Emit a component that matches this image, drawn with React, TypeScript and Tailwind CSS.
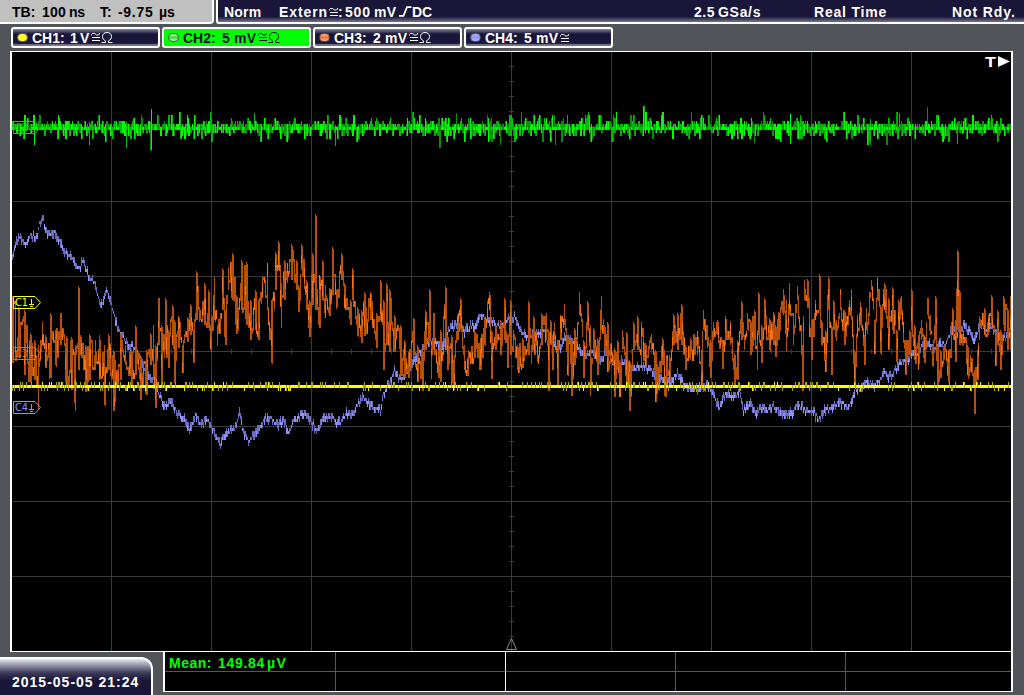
import React from 'react';
import clsx from 'clsx';

// ── Geometry ──────────────────────────────────────────────────────────────────
// The graticule keeps screen coordinates so traces and markers share one space.
const LEFT = 12;
const RIGHT = 1010;
const STEP = 3; // ADC quantisation, in pixels

const makeRandom = (seed: number) => {
  let s = seed;
  return () => {
    s = (s * 1664525 + 1013904223) >>> 0;
    return s / 4294967296;
  };
};

const quantise = (v: number, base: number) => base + Math.round((v - base) / STEP) * STEP;

interface Trace {
  dim: string;
  bright: string;
}

const bar = (x: number, y1: number, y2: number) => `M${x + 0.5} ${y1}V${y2}`;

// ── Channel data ──────────────────────────────────────────────────────────────
// x, highest point, lowest point
const CH3_ENVELOPE = `12 296 363,18 307 355,24 310 375,30 333 383,34 340 380,38 345 409,42 322 345,45 335 368,50 313 378,55 330 365,
60 313 345,66 336 385,71 337 390,75 345 411,78 286 370,80 335 355,85 345 392,89 334 380,95 340 370,99 335 380,104 345 405,108 334 370,
113 350 411,115 360 402,120 333 380,125 345 365,131 350 387,135 325 375,140 355 400,146 350 395,150 333 365,153 325 380,155 345 408,158 298 345,
161 325 385,165 298 350,168 330 368,172 305 345,174 320 383,178 316 348,182 345 373,187 317 342,190 304 335,193 330 363,196 271 320,
200 310 320,204 283 325,208 290 328,210 325 350,214 277 320,217 325 346,222 268 310,225 310 345,228 267 290,232 253 300,236 295 334,
241 260 310,246 262 325,250 300 340,255 290 330,258 300 340,262 277 298,267 263 310,271 300 363,275 252 290,278 241 270,281 283 328,
284 260 300,287 263 283,291 244 280,296 260 290,298 285 312,301 244 270,306 280 310,309 300 337,312 253 305,315 214 310,319 275 328,
322 260 300,325 285 318,329 288 316,332 247 295,336 290 309,341 253 280,344 283 308,350 300 325,352 268 300,357 307 336,361 310 343,
364 292 336,370 292 320,376 313 348,380 280 320,383 300 370,386 283 345,389 289 352,394 315 352,400 325 375,404 340 378,408 352 378,
413 318 360,417 345 382,422 350 391,425 310 350,429 289 340,431 345 379,433 313 350,438 350 378,440 330 382,445 286 350,447 335 370,
451 335 383,453 360 390,457 315 340,460 298 330,464 345 370,468 350 376,474 330 358,480 338 370,484 317 345,489 292 310,491 330 379,
495 325 350,500 320 355,504 298 340,507 335 368,510 300 355,513 330 352,517 345 370,522 338 368,528 301 355,531 345 364,533 316 350,
537 340 362,541 313 345,546 313 340,548 330 391,550 320 345,552 335 370,554 322 340,557 340 388,560 315 340,564 304 325,567 335 375,
571 340 396,574 328 365,579 292 315,583 340 378,587 301 330,590 325 396,593 328 355,597 338 375,601 296 330,604 325 350,607 322 372,
611 343 355,614 348 397,617 340 370,619 360 397,622 330 350,626 332 388,629 360 411,633 322 350,637 316 350,641 322 365,646 345 368,
651 334 350,655 350 402,658 367 390,662 338 365,664 350 396,669 355 385,673 314 345,677 313 350,681 304 345,685 345 370,690 338 360,
697 331 355,701 350 390,703 310 330,707 325 348,710 340 378,713 322 340,717 320 335,722 340 369,725 316 345,730 321 345,734 353 388,
737 340 380,741 301 340,744 335 350,747 313 330,750 320 355,754 310 340,757 330 370,758 292 335,761 325 363,764 298 330,769 318 350,
773 312 345,775 325 357,778 312 340,783 289 315,786 300 352,789 283 315,793 313 345,797 286 300,802 345 391,804 280 300,807 279 308,
811 320 360,815 300 320,819 274 310,821 320 345,825 330 372,828 277 310,831 325 375,833 300 330,836 320 341,840 289 310,844 310 345,
849 300 315,851 289 320,854 350 385,857 315 338,860 302 325,864 335 365,866 308 330,871 280 290,874 320 354,877 277 300,880 305 353,
884 283 310,888 298 350,892 287 330,896 330 362,898 300 330,901 296 315,905 340 375,909 330 355,911 289 330,914 325 360,918 335 370,
921 320 340,924 335 363,927 298 315,930 315 335,932 345 366,935 296 340,937 345 388,940 350 378,944 345 360,948 350 382,952 308 335,
955 320 362,957 250 330,959 290 345,963 330 345,967 345 375,970 355 372,974 370 414,977 350 380,979 316 340,984 308 335,988 315 335,
991 295 325,995 335 366,997 310 345,1000 330 370,1003 296 325,1007 308 350,1010 296 350`;

const CH4_POINTS = `12 260,16 240,20 238,24 246,30 236,36 238,39 225,43 220,46 234,54 234,60 244,66 254,72 260,78 269,83 261,88 276,
94 285,98 299,101 305,106 293,110 300,114 318,120 334,127 345,136 350,143 367,150 378,155 387,160 397,163 407,170 402,176 412,184 420,
189 430,195 416,200 424,207 420,213 430,219 444,228 432,235 428,239 414,243 433,248 443,258 430,264 420,270 418,276 425,283 422,288 433,
294 420,303 415,310 422,316 431,323 418,330 418,340 424,346 413,352 416,357 406,363 397,368 403,374 408,380 410,383 396,388 385,394 372,
399 380,405 375,412 364,420 352,427 342,434 341,442 348,448 330,455 326,463 332,470 327,476 325,480 316,487 322,494 324,500 328,505 322,
511 317,514 316,521 334,530 335,540 334,545 330,551 340,558 354,564 338,570 340,578 348,586 356,591 350,600 360,608 354,616 370,623 364,
630 369,640 366,648 368,655 376,662 381,670 382,677 373,684 385,690 389,698 389,708 387,714 398,719 408,725 394,735 397,739 393,743 410,
750 404,755 415,760 408,766 410,772 408,780 412,786 417,792 413,797 406,803 408,808 412,813 412,818 421,824 410,830 410,838 402,843 405,
847 409,851 403,855 390,860 390,866 382,874 387,880 380,883 372,888 378,895 370,902 362,908 362,912 352,917 355,922 345,928 342,933 350,
938 343,945 345,948 338,952 327,958 333,964 325,970 335,974 340,980 325,986 330,992 328,999 338,1005 338,1010 333`;

const parse = (s: string) => s.split(',').map(p => p.trim().split(' ').map(Number));

const lerpAt = (points: number[][], x: number, k: number) => {
  const i = points.findIndex(p => p[0] >= x);
  if (i <= 0) return points[i === 0 ? 0 : points.length - 1][k];
  const a = points[i - 1];
  const b = points[i];
  return a[k] + ((b[k] - a[k]) * (x - a[0])) / (b[0] - a[0]);
};

const buildNoisy = (): Trace => {
  const rnd = makeRandom(31);
  const env = parse(CH3_ENVELOPE);
  let dim = '';
  let bright = '';
  let prev = 330;
  for (let x = LEFT; x <= RIGHT; x++) {
    const hi = lerpAt(env, x, 1);
    const lo = lerpAt(env, x, 2);
    const key = env.find(p => p[0] === x);
    const target = hi + (lo - hi) * rnd();
    let y1 = quantise(Math.min(prev, target), 352);
    let y2 = quantise(Math.max(prev, target), 352) + STEP;
    if (key) {
      y1 = key[1];
      y2 = key[2];
      // tall swings are two samples wide
      if (y2 - y1 > 24 && rnd() < 0.85) dim += bar(x + 1, y1 + 2, y2);
    }
    dim += bar(x, y1, y2);
    const b = y1 + Math.floor(rnd() * Math.max(1, y2 - y1 - 9));
    if (rnd() < 0.4) bright += bar(x, b, Math.min(y2, b + 5 + rnd() * 13));
    prev = target;
  }
  return { dim, bright };
};

const buildSmooth = (): Trace => {
  const rnd = makeRandom(77);
  const points = parse(CH4_POINTS);
  let dim = '';
  let bright = '';
  for (let x = LEFT; x <= RIGHT; x++) {
    const y = quantise(lerpAt(points, x, 1) + (rnd() - 0.5) * 3, 352);
    const up = rnd() < 0.5 ? STEP : 0;
    const down = rnd() < 0.5 ? STEP : 0;
    dim += bar(x, y - 2 - up, y + 1 + down);
    if (rnd() < 0.5) bright += bar(x, y - 2, y + 1 + down);
  }
  return { dim, bright };
};

const CH2_SPIKES: Record<number, [number, number]> = {
  34: [115, 145], 89: [122, 145], 126: [122, 148], 150: [122, 151], 151: [109, 150], 210: [112, 132],
  254: [113, 131], 335: [125, 146], 440: [125, 148], 456: [113, 130], 500: [124, 145], 521: [112, 127],
  555: [124, 145], 567: [115, 130], 616: [112, 128], 643: [106, 136], 644: [106, 130], 645: [112, 133],
  646: [112, 130], 691: [112, 130], 754: [125, 143], 790: [114, 144], 870: [119, 145], 899: [113, 132],
  927: [107, 128], 957: [122, 144],
};

const buildFlat = () => {
  const rnd = makeRandom(9);
  const levels = ['', '', ''];
  let prev = 127;
  for (let x = LEFT; x <= RIGHT; x++) {
    const next = 127.5 + (rnd() + rnd() + rnd() + rnd() - 2) * 9.5;
    const [y1, y2] = CH2_SPIKES[x] ?? [
      Math.min(124, quantise(Math.min(prev, next) - 1, 127)) + (rnd() < 0.3 ? STEP : 0),
      Math.max(130, quantise(Math.max(prev, next) - 1, 127) + STEP),
    ];
    levels[Math.floor(rnd() * 3)] += bar(x, y1, y2);
    if (rnd() < 0.3) levels[2] += bar(x, 127, 130);
    prev = next;
  }
  return { dark: levels[0], mid: levels[1], bright: levels[2] };
};

const buildTicks = (): Trace => {
  const rnd = makeRandom(5);
  let dim = '';
  let bright = '';
  for (let x = LEFT; x <= RIGHT; x++) {
    const r = rnd();
    if (r < 0.15) dim += bar(x, 382, 388);
    else if (r < 0.25) dim += bar(x, 385, 391);
    else if (r < 0.28) bright += bar(x, 385, 391);
    else if (r < 0.3) bright += bar(x, 382, 388);
  }
  return { dim, bright };
};

const CH1 = buildTicks();
const CH2 = buildFlat();
const CH3 = buildNoisy();
const CH4 = buildSmooth();

const range = (from: number, to: number, step: number) =>
  Array.from({ length: Math.floor((to - from) / step) + 1 }, (_, i) => from + i * step);

const GRID =
  range(111, 911, 100).map(x => `M${x + 0.5} 52V651`).join('') +
  range(126, 576, 75).map(y => `M12 ${y + 0.5}H1011`).join('');

const GRID_TICKS =
  range(66, 636, 15).map(y => `M509 ${y + 0.5}h5`).join('') +
  range(31, 991, 20).map(x => `M${x + 0.5} 349v5`).join('');

// ── Small drawings ────────────────────────────────────────────────────────────

const Coupling: React.FC = () => (
  <svg width="9" height="10" viewBox="0 0 9 10" fill="none" stroke="currentColor" className="shrink-0">
    <path d="M.5 3.5v-1l1-1h2l2 1.5h2l1-1v-1" />
    <path d="M.5 5.5h8M.5 8.5h8" shapeRendering="crispEdges" />
  </svg>
);

const Ohm: React.FC = () => (
  <svg width="12" height="11" viewBox="0 0 12 11" fill="none" stroke="currentColor" className="shrink-0">
    <path d="M.5 10.5h4V8.8C2.3 7.8 1.5 6.4 1.5 4.5 1.5 2 3.5.5 6 .5s4.5 1.5 4.5 4c0 1.9-.8 3.3-3 4.3v1.7h4" />
  </svg>
);

const RisingEdge: React.FC = () => (
  <svg width="13" height="11" viewBox="0 0 13 11" fill="none" stroke="currentColor" strokeWidth="1.7" className="shrink-0">
    <path d="M0 9.8h4.5L8 1.2h4.5" />
  </svg>
);

interface MarkerProps {
  y: number;
  color: string;
  label: string;
}

const Marker: React.FC<MarkerProps> = ({ y, color, label }) => (
  <g transform={`translate(13 ${y})`} stroke={color} fill="none">
    <path d="M.5 .5H22L27.5 6.5 22 12.5H.5Z" />
    <text x="2" y="10" fill={color} stroke="none" fontSize="10" fontWeight="400" textLength="13" fontFamily="DejaVu Sans, sans-serif" lengthAdjust="spacingAndGlyphs">
      {label}
    </text>
    <path d="M18.5 3v5M16 8.5h5M17 10.5h3" shapeRendering="crispEdges" />
  </g>
);

// ── Toolbar ───────────────────────────────────────────────────────────────────

interface Channel {
  name: string;
  value: string;
  unit: string;
  ohm: boolean;
  led: string;
  active?: boolean;
}

const CHANNELS: Channel[] = [
  { name: 'CH1:', value: '1', unit: 'V', ohm: true, led: 'bg-[#ffff20]' },
  { name: 'CH2:', value: '5', unit: 'mV', ohm: true, led: 'bg-linear-to-b from-[#b0ffa0] via-[#30e030] to-[#b0ffb0]', active: true },
  { name: 'CH3:', value: '2', unit: 'mV', ohm: true, led: 'bg-linear-to-b from-[#ffb080] via-[#ff7020] to-[#ffb080]' },
  { name: 'CH4:', value: '5', unit: 'mV', ohm: false, led: 'bg-linear-to-b from-[#b0b0ff] via-[#9090ff] to-[#b8b8ff]' },
];

const ChannelButton: React.FC<{ channel: Channel }> = ({ channel: c }) => (
  <div
    className={clsx(
      'flex h-[21px] w-[149px] items-center rounded-[3px] border-2 border-white pl-1',
      c.active
        ? 'bg-[#00ff00] text-[#10102c]'
        : 'bg-linear-to-b from-[#85839a] via-[#19163a] via-30% to-[#19163a] text-white shadow-[inset_0_-2px_1px_#77758c]',
    )}
  >
    <span className={clsx('h-[9px] w-[11px] shrink-0 rounded-[5px] border border-[#55565c]', c.led)} />
    <span className="ml-1 w-[38px] shrink-0">{c.name}</span>
    <span className={clsx('shrink-0', c.unit === 'V' ? 'w-[10px]' : 'ml-[1px] w-[12px]')}>{c.value}</span>
    <span className={clsx('shrink-0', c.unit === 'V' ? 'w-[11px]' : 'w-[24px] tracking-[0.4px]')}>{c.unit}</span>
    <span className="flex gap-px">
      <Coupling />
      {c.ohm && <Ohm />}
    </span>
  </div>
);

const Header: React.FC = () => (
  <div className="flex h-6 justify-between">
    <div className="flex w-[214px] items-center rounded-br-[4px] border-r-2 border-b-2 border-white bg-[#c0c0c0] pt-px pl-3 text-black">
      <span className="w-[30px]">TB:</span>
      <span className="w-[27px] tracking-[0.2px]">100</span>
      <span className="w-[31px] tracking-[-0.4px]">ns</span>
      <span className="w-[18px]">T:</span>
      <span className="w-[41px] tracking-[0.7px]">-9.75</span>
      <span>µs</span>
    </div>
    <div className="flex w-[808px] items-center rounded-bl-[3px] border-b-2 border-l-2 border-white bg-linear-to-b from-[#19163a] from-75% to-[#77758c] pt-px pl-[6px]">
      <span className="w-[55px] tracking-[0.2px]">Norm</span>
      <span className="w-[50px] tracking-[0.9px]">Extern</span>
      <Coupling />
      <span className="w-[7px]">:</span>
      <span className="w-[29px] tracking-[0.8px]">500</span>
      <span className="w-[25px] tracking-[0.3px]">mV</span>
      <RisingEdge />
      <span className="w-[282px]">DC</span>
      <span className="w-[24px] tracking-[0.5px]">2.5</span>
      <span className="w-[96px] tracking-[0.7px]">GSa/s</span>
      <span className="w-[138px] tracking-[0.8px]">Real Time</span>
      <span className="tracking-[0.9px] whitespace-nowrap">Not Rdy.</span>
    </div>
  </div>
);

// ── Screen ────────────────────────────────────────────────────────────────────

const Graticule: React.FC = () => (
  <div className="ml-[10px] h-[601px] w-[1003px] bg-black">
    <svg width="1003" height="601" viewBox="10 51 1003 601" className="block">
      <g shapeRendering="crispEdges" fill="none">
        <path d={GRID} stroke="#3a3a3a" />
        <path d={GRID_TICKS} stroke="#3a3a3a" />
        <path d={CH4.dim} stroke="#6c6cbd" />
        <path d={CH4.bright} stroke="#9090ff" />
        <path d={CH3.dim} stroke="#b8500c" />
        <path d={CH3.bright} stroke="#fa701a" />
        <path d={CH2.dark} stroke="#009400" />
        <path d={CH2.mid} stroke="#00bc00" />
        <path d={CH2.bright} stroke="#00fa00" />
        <path d="M12 386.5H1011" stroke="#ffff00" strokeWidth="3" />
        <path d={CH1.dim} stroke="#aaaa00" />
        <path d={CH1.bright} stroke="#ffff00" />
      </g>
      <Marker y={121} color="#00e000" label="C2" />
      <Marker y={296} color="#ffff20" label="C1" />
      <Marker y={347} color="#e8681c" label="C3" />
      <Marker y={401} color="#9090ff" label="C4" />
      <path d="M511.5 638.5L516.5 649.5H506.5Z" fill="none" stroke="#888888" />
      <text x="985" y="67" fill="#ffffff" fontSize="15" fontWeight="700" fontFamily="Liberation Sans, sans-serif" textLength="11" lengthAdjust="spacingAndGlyphs">
        T
      </text>
      <path d="M998 56L1010 61.5L998 67Z" fill="#ffffff" />
      <g shapeRendering="crispEdges" fill="#ffffff">
        <rect x="10" y="51" width="1003" height="1" />
        <rect x="10" y="651" width="1003" height="1" />
        <rect x="10" y="51" width="2" height="601" />
        <rect x="1011" y="51" width="2" height="601" />
      </g>
    </svg>
  </div>
);

const MeasurementTable: React.FC = () => (
  <div className="ml-[10px] grid h-10 w-[850px] grid-cols-[171px_170px_170px_170px_1fr] grid-rows-[20px_19px] border-r-2 border-b border-l-2 border-white bg-black">
    {range(0, 9, 1).map(i => (
      <div
        key={i}
        className={clsx(
          i < 5 && 'border-b border-b-[#55585c]',
          i % 5 < 4 && 'border-r',
          i % 5 === 1 ? 'border-r-white' : 'border-r-[#55585c]',
        )}
      >
        {i === 0 && (
          <div className="flex h-[19px] pl-1 leading-[22px] text-[#00ff00]">
            <span className="w-[49px] tracking-[0.5px]">Mean:</span>
            <span className="w-[49px] tracking-[0.7px]">149.84</span>
            <span className="tracking-[1.5px]">µV</span>
          </div>
        )}
      </div>
    ))}
  </div>
);

const App: React.FC = () => (
  <div className="flex h-[695px] w-[1024px] flex-col overflow-hidden bg-[#515459] font-['Liberation_Sans',Arial,sans-serif] text-[14px] leading-none font-bold text-white">
    <Header />
    <div className="mt-[3px] mb-[3px] flex gap-[2px] pl-[11px]">
      {CHANNELS.map(c => (
        <ChannelButton key={c.name} channel={c} />
      ))}
    </div>
    <Graticule />
    <div className="flex">
      <div className="mt-[5px] flex h-[38px] w-[153px] items-center rounded-tr-[12px] border-t-2 border-r-2 border-white bg-linear-to-b from-[#e8e8ee] via-[#3a3756] via-40% to-[#19163a] to-60% pt-[9px] pl-[12px]">
        <span className="tracking-[1px] whitespace-nowrap">2015-05-05 21:24</span>
      </div>
      <MeasurementTable />
    </div>
  </div>
);

export default App;
